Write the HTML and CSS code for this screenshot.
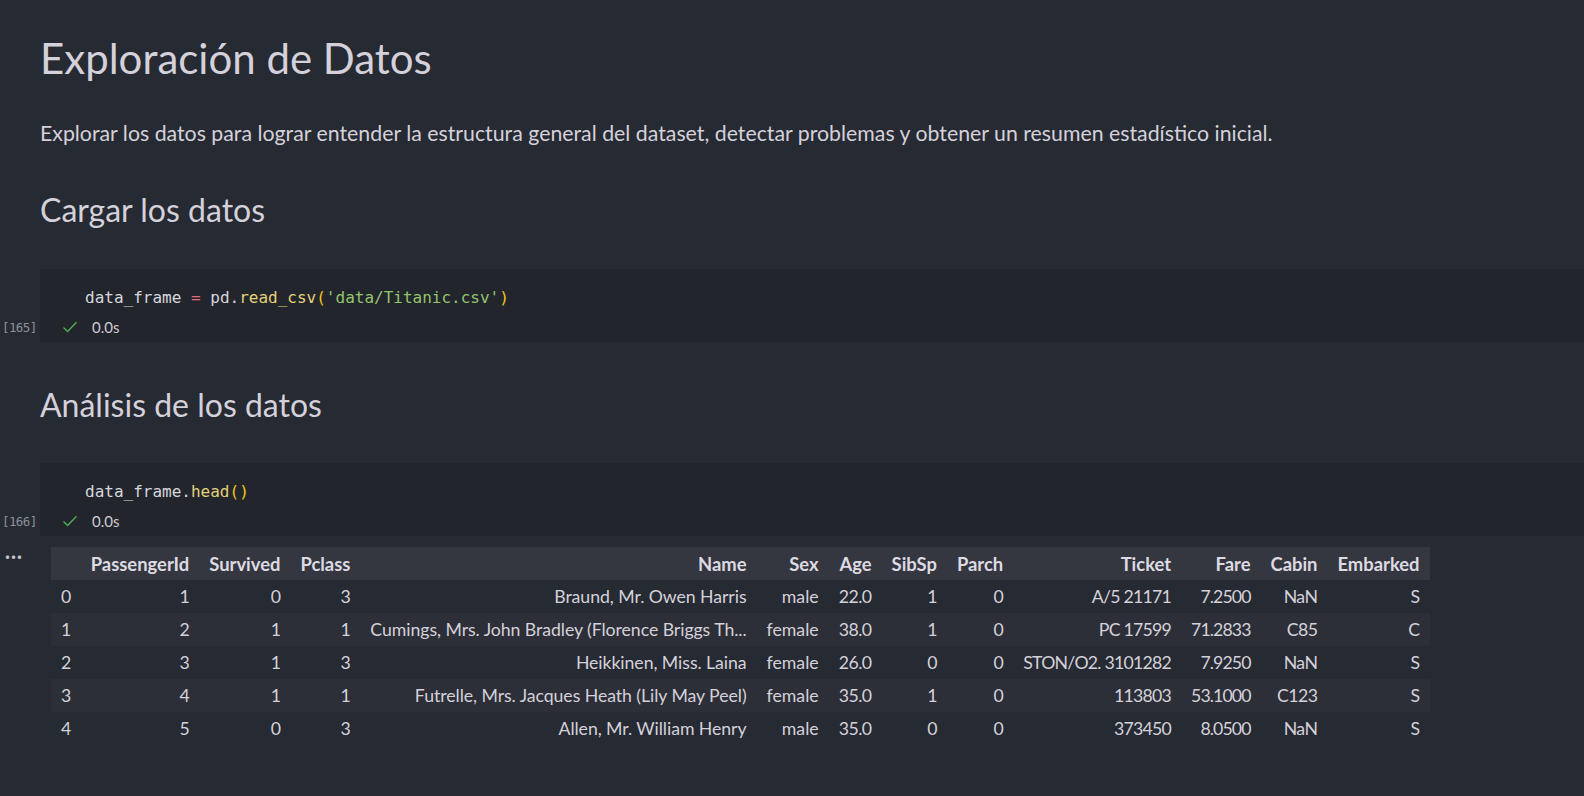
FILE: index.html
```html
<!DOCTYPE html>
<html lang="es">
<head>
<meta charset="utf-8">
<title>Exploración de Datos</title>
<link rel="stylesheet" href="styles.css">
</head>
<body>
<div class="notebook">
  <section class="md">
    <h1 class="h1">Exploración de Datos</h1>
    <p class="para">Explorar los datos para lograr entender la estructura general del dataset, detectar problemas y obtener un resumen estadístico inicial.</p>
    <h2 class="h2 h2-first">Cargar los datos</h2>
  </section>

  <section class="cell cell-1">
    <div class="gutter"><span class="count">[165]</span></div>
    <div class="cell-body">
      <div class="code"><span class="v">data_frame</span> <span class="op">=</span> <span class="v">pd</span>.<span class="fn">read_csv</span><span class="br">(</span><span class="str">'data/Titanic.csv'</span><span class="br">)</span></div>
      <div class="status">
        <svg class="check" width="16" height="16" viewBox="0 0 16 16"><path d="M1.5 8.6 L5.6 12.6 L14.5 3.2" fill="none" stroke="#4caf50" stroke-width="1.4"/></svg>
        <span class="time">0.0s</span>
      </div>
    </div>
  </section>

  <section class="md">
    <h2 class="h2 h2-second">Análisis de los datos</h2>
  </section>

  <section class="cell cell-2">
    <div class="gutter"><span class="count">[166]</span></div>
    <div class="cell-body">
      <div class="code"><span class="v">data_frame</span>.<span class="fn">head</span><span class="br">()</span></div>
      <div class="status">
        <svg class="check" width="16" height="16" viewBox="0 0 16 16"><path d="M1.5 8.6 L5.6 12.6 L14.5 3.2" fill="none" stroke="#4caf50" stroke-width="1.4"/></svg>
        <span class="time">0.0s</span>
      </div>
    </div>
  </section>

  <section class="output">
    <div class="out-gutter"><span class="dots">···</span></div>
    <table class="df">
      <thead>
        <tr><th></th><th>PassengerId</th><th>Survived</th><th>Pclass</th><th>Name</th><th>Sex</th><th>Age</th><th>SibSp</th><th>Parch</th><th>Ticket</th><th>Fare</th><th>Cabin</th><th>Embarked</th></tr>
      </thead>
      <tbody>
        <tr><td class="idx">0</td><td>1</td><td>0</td><td>3</td><td class="name">Braund, Mr. Owen Harris</td><td class="sex">male</td><td>22.0</td><td>1</td><td>0</td><td class="ticket">A/5 21171</td><td class="fare">7.2500</td><td>NaN</td><td>S</td></tr>
        <tr><td class="idx">1</td><td>2</td><td>1</td><td>1</td><td class="name">Cumings, Mrs. John Bradley (Florence Briggs Th...</td><td class="sex">female</td><td>38.0</td><td>1</td><td>0</td><td class="ticket">PC 17599</td><td class="fare">71.2833</td><td>C85</td><td>C</td></tr>
        <tr><td class="idx">2</td><td>3</td><td>1</td><td>3</td><td class="name">Heikkinen, Miss. Laina</td><td class="sex">female</td><td>26.0</td><td>0</td><td>0</td><td class="ticket">STON/O2. 3101282</td><td class="fare">7.9250</td><td>NaN</td><td>S</td></tr>
        <tr><td class="idx">3</td><td>4</td><td>1</td><td>1</td><td class="name">Futrelle, Mrs. Jacques Heath (Lily May Peel)</td><td class="sex">female</td><td>35.0</td><td>1</td><td>0</td><td class="ticket">113803</td><td class="fare">53.1000</td><td>C123</td><td>S</td></tr>
        <tr><td class="idx">4</td><td>5</td><td>0</td><td>3</td><td class="name">Allen, Mr. William Henry</td><td class="sex">male</td><td>35.0</td><td>0</td><td>0</td><td class="ticket">373450</td><td class="fare">8.0500</td><td>NaN</td><td>S</td></tr>
      </tbody>
    </table>
  </section>
</div>
</body>
</html>
```

FILE: styles.css
```css
html, body {
  margin: 0;
  padding: 0;
  background: #262a32;
  height: 100%;
  overflow: hidden;
}

body {
  font-family: Lato, "Open Sans", sans-serif;
  color: #d5d1da;
}

.notebook {
  padding-top: 26px;
}

.md {
  padding-left: 40px;
}

.h1 {
  margin: 0;
  font-size: 42px;
  font-weight: 400;
  line-height: 64px;
}

.para {
  margin: 28px 0 0;
  font-size: 21.3px;
  line-height: 30px;
}

.h2 {
  margin: 0;
  font-weight: 400;
  font-size: 32px;
  line-height: 40px;
}

.h2-first {
  margin-top: 42px;
}

.h2-second {
  margin-top: 43px;
}

.cell {
  display: grid;
  grid-template-columns: 40px 1fr;
}

.cell-1 {
  margin-top: 39px;
}

.cell-2 {
  margin-top: 38px;
}

.gutter {
  display: flex;
  align-items: flex-end;
  padding-bottom: 6px;
}

.count {
  font-family: "DejaVu Sans Mono", monospace;
  font-size: 12.5px;
  letter-spacing: -0.6px;
  color: #8d8f96;
  padding-left: 2px;
  line-height: 16px;
}

.cell-body {
  background: #22252c;
  height: 73px;
  box-sizing: border-box;
  padding-top: 18px;
}

.code {
  font-family: "DejaVu Sans Mono", "Liberation Mono", monospace;
  font-size: 16px;
  line-height: 22px;
  padding-left: 45px;
  color: #d6d6de;
  white-space: pre;
}

.code .op { color: #e06c75; }
.code .fn { color: #e5d07a; }
.code .br { color: #f5c518; }
.code .str { color: #93c46c; }

.status {
  display: flex;
  align-items: center;
  height: 24px;
  margin-top: 6px;
  padding-left: 22px;
}

.check {
  display: block;
}

.time {
  margin-left: 14px;
  font-size: 15px;
  color: #cfcbd4;
}

.output {
  display: flex;
  align-items: flex-start;
  margin-top: 11px;
}

.out-gutter {
  width: 51px;
  flex: none;
}

.dots {
  display: block;
  padding-left: 5px;
  font-size: 18px;
  line-height: 18px;
  letter-spacing: 1px;
  color: #c8c4cc;
  font-weight: 700;
}

.df {
  border-collapse: collapse;
  font-size: 17.7px;
  color: #d5d1da;
}

.df th, .df td {
  padding: 0 10px;
  height: 33px;
  text-align: right;
  white-space: nowrap;
}

.df td {
  letter-spacing: -0.5px;
}

.df td.name {
  letter-spacing: -0.06px;
}

.df td.sex {
  letter-spacing: 0;
}

.df td.ticket {
  letter-spacing: -0.75px;
}

.df td.fare {
  letter-spacing: -0.9px;
}

.df thead th {
  background: #343740;
  font-weight: 700;
  font-size: 18.4px;
  color: #dedae2;
}

.df td.idx {
  text-align: left;
}

.df tbody tr:nth-child(even) {
  background: #2c2f37;
}
```
